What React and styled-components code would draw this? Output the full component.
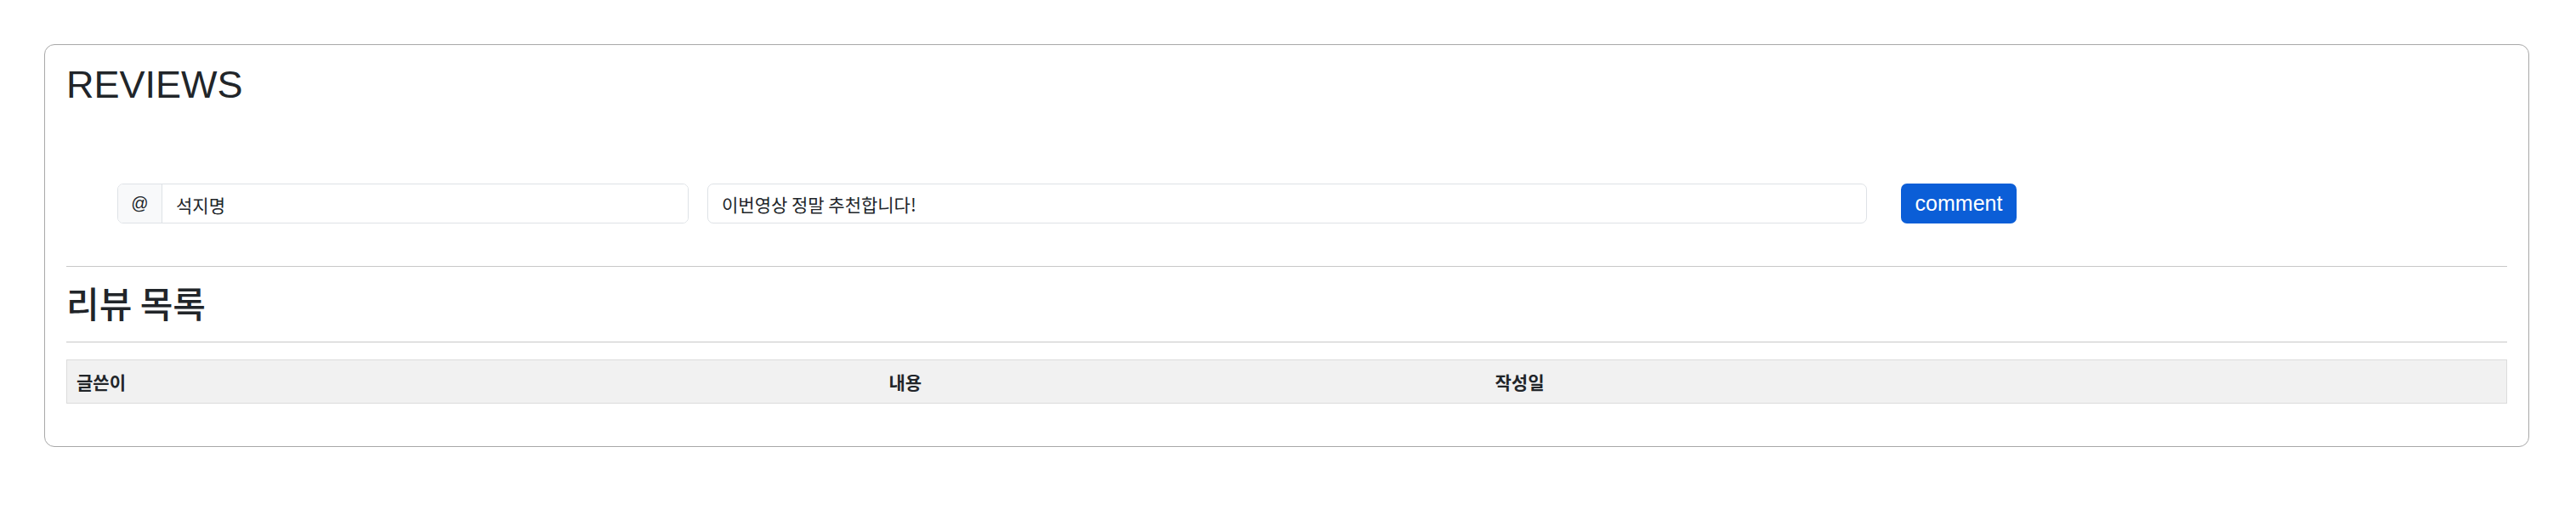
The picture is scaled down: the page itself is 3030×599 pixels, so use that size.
import styled, { createGlobalStyle } from "styled-components";

const GlobalStyle = createGlobalStyle`
    body {
        margin: 0;
        background: #fff;
        color: #212529;
        font-family: "Liberation Sans", "Noto Sans CJK KR", sans-serif;
    }
`;

const Page = styled.div`
    padding: 52px 55px 40px 52px;
`;

const Card = styled.section`
    border: 1px solid #a8a8a8;
    border-radius: 12px;
    padding: 20px 25px 50px 25px;
`;

const Title = styled.h1`
    margin: 0;
    font-size: 45px;
    font-weight: 400;
    line-height: 1.2;
    color: #212529;
`;

const Form = styled.form`
    display: flex;
    align-items: center;
    margin: 89px 0 0 0;
    padding-left: 60px;
`;

const InputGroup = styled.div`
    display: flex;
    width: 672px;
    height: 47px;
    border: 1px solid #dee2e6;
    border-radius: 7px;
    box-sizing: border-box;
    overflow: hidden;
`;

const Addon = styled.span`
    display: flex;
    align-items: center;
    justify-content: center;
    width: 51px;
    background: #f8f9fa;
    border-right: 1px solid #dee2e6;
    font-size: 20px;
`;

const Field = styled.input`
    flex: 1;
    min-width: 0;
    border: ${(props) => (props.$bare ? "none" : "1px solid #dee2e6")};
    border-radius: ${(props) => (props.$bare ? "0" : "7px")};
    width: ${(props) => props.$width || "auto"};
    height: 47px;
    box-sizing: border-box;
    padding: 0 16px;
    font-size: 21px;
    font-family: "Noto Sans CJK KR", "Liberation Sans", sans-serif;
    color: #212529;
    background: #fff;
    outline: none;
`;

const Content = styled(Field)`
    flex: none;
    margin-left: 22px;
`;

const Button = styled.button`
    margin-left: 40px;
    width: 136px;
    height: 47px;
    border: none;
    border-radius: 7px;
    background: #0b5ed7;
    color: #fff;
    font-size: 25px;
    font-family: "Liberation Sans", sans-serif;
`;

const Divider = styled.hr`
    margin: ${(props) => props.$top || 0}px 0 0 0;
    border: none;
    border-top: 1px solid #c8c8c8;
`;

const SubTitle = styled.h2`
    margin: 0;
    height: 88px;
    display: flex;
    align-items: center;
    padding-bottom: 6px;
    box-sizing: border-box;
    font-size: 42px;
    font-weight: 500;
    font-family: "Noto Sans CJK KR", sans-serif;
    color: #212529;
`;

const Table = styled.table`
    margin-top: 20px;
    width: 100%;
    border-collapse: collapse;
    table-layout: fixed;
`;

const Th = styled.th`
    width: ${(props) => props.$width};
    height: 51px;
    box-sizing: border-box;
    padding: 0 11px;
    text-align: left;
    font-size: 21px;
    font-weight: 700;
    font-family: "Noto Sans CJK KR", sans-serif;
    color: #212529;
    background: #f1f1f1;
    border-top: 1px solid #dcdcdc;
    border-bottom: 1px solid #dcdcdc;
    &:first-child { border-left: 1px solid #dcdcdc; }
    &:last-child { border-right: 1px solid #dcdcdc; }
`;

export default function App() {
    return (
        <Page>
            <GlobalStyle />
            <Card>
                <Title>REVIEWS</Title>
                <Form onSubmit={(e) => e.preventDefault()}>
                    <InputGroup>
                        <Addon>@</Addon>
                        <Field $bare defaultValue="석지명" />
                    </InputGroup>
                    <Content $width="1364px" defaultValue="이번영상 정말 추천합니다!" />
                    <Button type="submit">comment</Button>
                </Form>
                <Divider $top={50} />
                <SubTitle>리뷰 목록</SubTitle>
                <Divider />
                <Table>
                    <thead>
                        <tr>
                            <Th $width="956px">글쓴이</Th>
                            <Th $width="713px">내용</Th>
                            <Th>작성일</Th>
                        </tr>
                    </thead>
                    <tbody />
                </Table>
            </Card>
        </Page>
    );
}
